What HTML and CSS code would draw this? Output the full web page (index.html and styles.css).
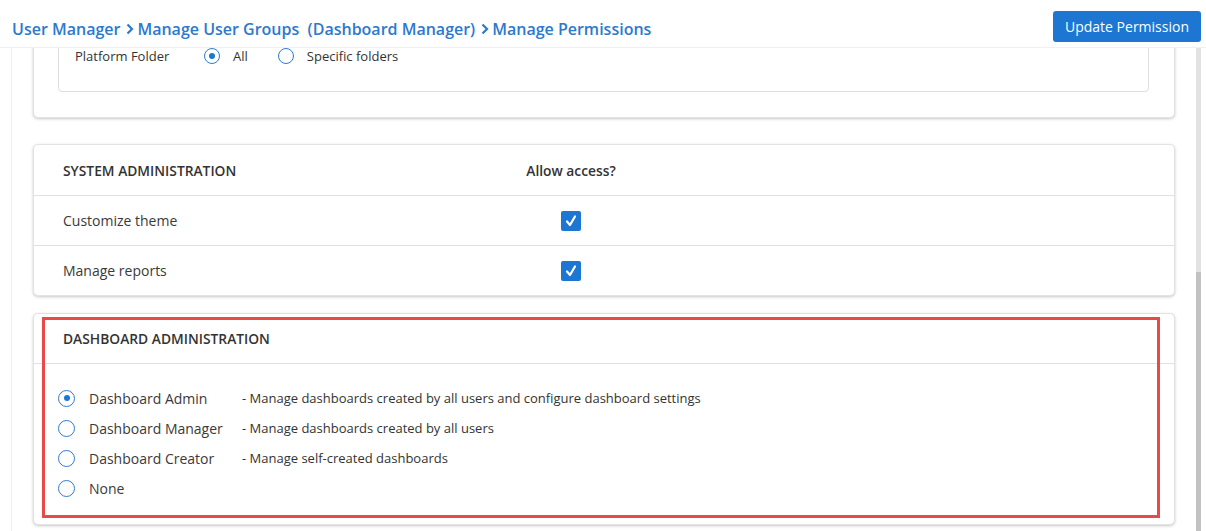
FILE: index.html
```html
<!DOCTYPE html>
<html>
<head>
<meta charset="utf-8">
<link rel="stylesheet" href="styles.css">
</head>
<body>
<header class="topbar">
  <nav class="crumbs">
    <span class="crumb">User Manager</span>
    <svg class="chev" viewBox="0 0 8 12" width="8" height="12"><path d="M1.5 1.5 L6 6 L1.5 10.5" fill="none" stroke="#2b79d0" stroke-width="2.2"/></svg>
    <span class="crumb">Manage User Groups&nbsp; (Dashboard Manager)</span>
    <svg class="chev" viewBox="0 0 8 12" width="8" height="12"><path d="M1.5 1.5 L6 6 L1.5 10.5" fill="none" stroke="#2b79d0" stroke-width="2.2"/></svg>
    <span class="crumb">Manage Permissions</span>
  </nav>
  <button class="btn-primary">Update Permission</button>
</header>
<div class="main">
  <div class="scroll-area">
    <div class="scroll-inner">
      <section class="card card-platform">
        <div class="inner-box">
          <div class="folder-row">
            <span class="folder-label">Platform Folder</span>
            <label class="radio-opt"><span class="radio checked"></span><span>All</span></label>
            <label class="radio-opt"><span class="radio"></span><span>Specific folders</span></label>
          </div>
        </div>
      </section>

      <section class="card card-system">
        <div class="sys-row sys-head">
          <span class="head-title">SYSTEM ADMINISTRATION</span>
          <span class="col-access head-title-normal">Allow access?</span>
        </div>
        <div class="sys-row">
          <span>Customize theme</span>
          <span class="col-access"><span class="checkbox"><svg viewBox="0 0 20 20" width="20" height="20"><path d="M6 10.5 L9 14 L14 5.5" fill="none" stroke="#fff" stroke-width="2.2" stroke-linecap="round" stroke-linejoin="round"/></svg></span></span>
        </div>
        <div class="sys-row">
          <span>Manage reports</span>
          <span class="col-access"><span class="checkbox"><svg viewBox="0 0 20 20" width="20" height="20"><path d="M6 10.5 L9 14 L14 5.5" fill="none" stroke="#fff" stroke-width="2.2" stroke-linecap="round" stroke-linejoin="round"/></svg></span></span>
        </div>
      </section>

      <section class="card card-dash">
        <div class="dash-head"><span class="head-title">DASHBOARD ADMINISTRATION</span></div>
        <div class="dash-body">
          <div class="dash-row"><span class="radio big checked"></span><span class="dash-label">Dashboard Admin</span><span class="dash-desc">- Manage dashboards created by all users and configure dashboard settings</span></div>
          <div class="dash-row"><span class="radio big"></span><span class="dash-label">Dashboard Manager</span><span class="dash-desc">- Manage dashboards created by all users</span></div>
          <div class="dash-row"><span class="radio big"></span><span class="dash-label">Dashboard Creator</span><span class="dash-desc">- Manage self-created dashboards</span></div>
          <div class="dash-row"><span class="radio big"></span><span class="dash-label">None</span></div>
        </div>
        <div class="highlight"></div>
      </section>
    </div>
  </div>
  <div class="scrollbar"><div class="thumb"></div></div>
</div>
</body>
</html>
```

FILE: styles.css
```css
* { box-sizing: border-box; }
html, body { margin: 0; padding: 0; }
body {
  font-family: "Open Sans", "Noto Sans", sans-serif;
  color: #333;
  background: #fff;
  width: 1206px;
  height: 531px;
  overflow: hidden;
}
.topbar {
  height: 48px;
  display: flex;
  align-items: center;
  justify-content: space-between;
  padding: 0 5px 0 12px;
  border-bottom: 1px solid #f0f0f0;
}
.crumbs {
  display: flex;
  align-items: center;
  gap: 3px;
  padding-top: 10px;
  font-size: 16px;
  font-weight: 600;
  color: #2b79d0;
}
.chev { margin: 1px 0 0 3px; }
.btn-primary {
  height: 31px;
  margin-top: 6px;
  padding: 0 12px;
  background: #1c76d2;
  color: #fff;
  border: none;
  border-radius: 3px;
  font-family: inherit;
  font-size: 14px;
}
.main {
  display: flex;
  height: 483px;
}
.scroll-area {
  flex: 1;
  margin-left: 11px;
  border-left: 1px solid #eee;
  overflow: hidden;
}
.scroll-inner {
  margin-top: -39px;
  padding: 0 19px 0 21px;
}
.scrollbar {
  width: 5px;
  margin-right: 5px;
  background: #e2e2e2;
  display: flex;
  flex-direction: column;
  padding-top: 224px;
}
.thumb { flex: 1; background: #c2c2c2; }
.card {
  position: relative;
  background: #fff;
  border: 1px solid #e3e3e3;
  border-radius: 5px;
  box-shadow: 0 1px 3px rgba(0,0,0,0.22);
  width: 1142px;
}
.card-platform {
  padding: 25px 25px 25px 24px;
  margin-bottom: 26px;
}
.inner-box {
  border: 1px solid #dedede;
  border-radius: 4px;
  padding: 10px 16px 25px;
}
.folder-row {
  display: flex;
  align-items: center;
  height: 20px;
  font-size: 13px;
  color: #333;
}
.folder-label { width: 129px; }
.radio-opt {
  display: flex;
  align-items: center;
  gap: 13px;
  margin-right: 30px;
}
.radio {
  display: inline-block;
  width: 16px;
  height: 16px;
  border: 1.5px solid #2a7cd4;
  border-radius: 50%;
  position: relative;
  flex: none;
}
.radio.checked::after {
  content: "";
  position: absolute;
  left: 50%; top: 50%;
  width: 6px; height: 6px;
  margin: -3px 0 0 -3px;
  border-radius: 50%;
  background: #1c76d2;
}
.radio.big { width: 17px; height: 17px; }
.card-system { margin-bottom: 17px; }
.sys-row {
  display: grid;
  grid-template-columns: 448px 120px;
  align-items: center;
  height: 50px;
  padding-left: 29px;
  font-size: 14px;
  color: #3a3a3a;
  border-top: 1px solid #e0e0e0;
}
.sys-row.sys-head { border-top: none; height: 50px; }
.head-title {
  font-size: 13.8px;
  font-weight: 600;
  color: #333;
}
.head-title-normal {
  font-size: 13.8px;
  font-weight: 600;
  color: #333;
}
.col-access {
  display: flex;
  justify-content: center;
}
.checkbox {
  width: 20px; height: 20px;
  border-radius: 2px;
  background: #1c76d2;
  display: block;
}
.checkbox svg { display: block; }
.card-dash { height: 212px; }
.dash-head {
  height: 50px;
  display: flex;
  align-items: center;
  padding-left: 29px;
  border-bottom: 1px solid #e0e0e0;
}
.dash-body { padding: 19px 0 20px 24px; }
.dash-row {
  display: flex;
  align-items: center;
  height: 30px;
  font-size: 14px;
  color: #3a3a3a;
}
.dash-label { width: 153px; margin-left: 14px; }
.dash-desc { font-size: 13px; color: #333; }
.highlight {
  position: absolute;
  left: 8px;
  top: 3px;
  width: 1118px;
  height: 201px;
  border: 3px solid #e84a48;
  pointer-events: none;
}
```
